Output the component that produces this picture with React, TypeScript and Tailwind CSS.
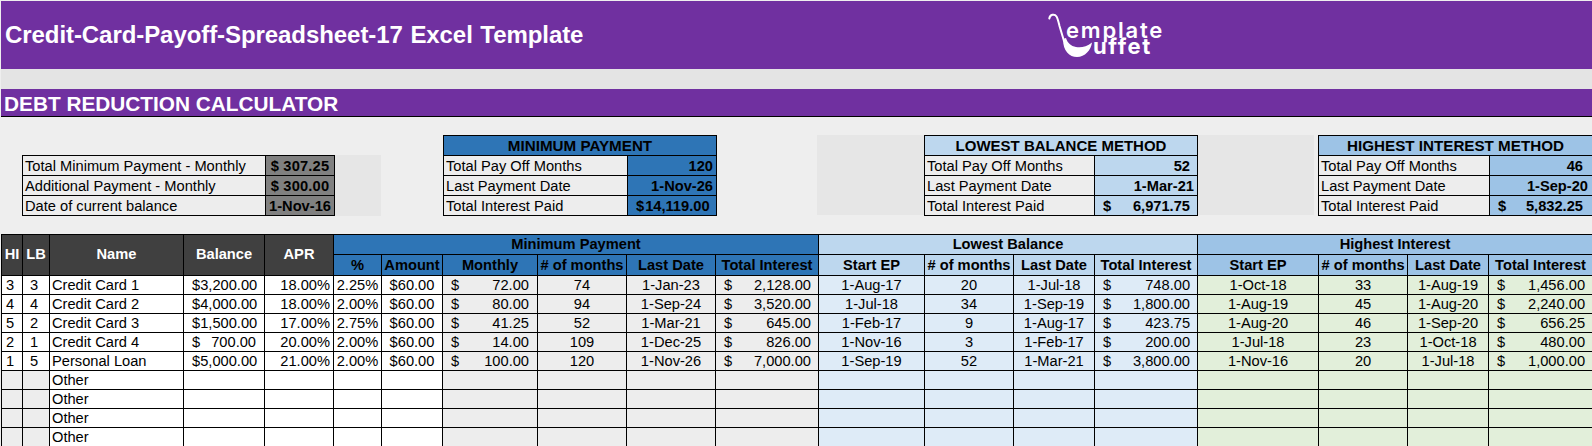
const font = { fontFamily: '"Liberation Sans", Arial, sans-serif' };

type SumRow = { label: string; value?: string; money?: [string, string]; cls: string };

function Money({ s, v, cls = "pl-2 pr-2" }: { s: string; v: string; cls?: string }) {
  return (
    <div className={`flex justify-between ${cls}`}>
      <span>{s}</span>
      <span>{v}</span>
    </div>
  );
}

function Summary({
  title,
  headBg,
  valBg,
  rows,
  widthCls,
  labelCls,
}: {
  title?: string;
  headBg: string;
  valBg: string;
  rows: SumRow[];
  widthCls: string;
  labelCls: string;
}) {
  return (
    <table className={`table-fixed ${widthCls} text-[14.67px] leading-[18px] text-black`}>
      <colgroup>
        <col className={labelCls} />
        <col />
      </colgroup>
      <tbody>
        {title && (
          <tr className="h-[20px]">
            <td colSpan={2} className={`border border-black p-0 text-center font-bold whitespace-nowrap ${headBg}`}>
              {title}
            </td>
          </tr>
        )}
        {rows.map((r) => (
          <tr key={r.label} className="h-[20px]">
            <td className="border border-black p-0 pl-[2px] whitespace-nowrap bg-[#ededed]">{r.label}</td>
            <td className={`border border-black p-0 font-bold whitespace-nowrap ${valBg} ${r.money ? "" : r.cls}`}>
              {r.money ? <Money s={r.money[0]} v={r.money[1]} cls={r.cls} /> : r.value}
            </td>
          </tr>
        ))}
      </tbody>
    </table>
  );
}

const cols = [21, 27, 134, 81, 69, 48, 61, 95, 89, 89, 103, 106, 89, 81, 103, 121, 89, 81, 104];

type Row = [string, string, string, string, string, string, string, string, string, string, string, string, string, string, string, string, string, string];

const data: Row[] = [
  ["3", "3", "Credit Card 1", "3,200.00", "18.00%", "2.25%", "72.00", "74", "1-Jan-23", "2,128.00", "1-Aug-17", "20", "1-Jul-18", "748.00", "1-Oct-18", "33", "1-Aug-19", "1,456.00"],
  ["4", "4", "Credit Card 2", "4,000.00", "18.00%", "2.00%", "80.00", "94", "1-Sep-24", "3,520.00", "1-Jul-18", "34", "1-Sep-19", "1,800.00", "1-Aug-19", "45", "1-Aug-20", "2,240.00"],
  ["5", "2", "Credit Card 3", "1,500.00", "17.00%", "2.75%", "41.25", "52", "1-Mar-21", "645.00", "1-Feb-17", "9", "1-Aug-17", "423.75", "1-Aug-20", "46", "1-Sep-20", "656.25"],
  ["2", "1", "Credit Card 4", "700.00", "20.00%", "2.00%", "14.00", "109", "1-Dec-25", "826.00", "1-Nov-16", "3", "1-Feb-17", "200.00", "1-Jul-18", "23", "1-Oct-18", "480.00"],
  ["1", "5", "Personal Loan", "5,000.00", "21.00%", "2.00%", "100.00", "120", "1-Nov-26", "7,000.00", "1-Sep-19", "52", "1-Mar-21", "3,800.00", "1-Nov-16", "20", "1-Jul-18", "1,000.00"],
];

const td = "border border-black p-0 whitespace-nowrap overflow-hidden";
const th = "border border-black p-0 font-bold text-center whitespace-nowrap overflow-hidden";

function Group({ bg, row, i }: { bg: string; row?: Row; i: number }) {
  return (
    <>
      <td className={`${td} ${bg} text-center`}>{row?.[i]}</td>
      <td className={`${td} ${bg} text-center`}>{row?.[i + 1]}</td>
      <td className={`${td} ${bg} text-center`}>{row?.[i + 2]}</td>
      <td className={`${td} ${bg}`}>{row && <Money s="$" v={row[i + 3]} cls="pl-2 pr-[7px]" />}</td>
    </>
  );
}

function DataRow({ row, name }: { row?: Row; name: string }) {
  return (
    <tr className="h-[19px]">
      <td className={`${td} text-center pr-1 ${row ? "bg-white" : "bg-[#ededed]"}`}>{row?.[0]}</td>
      <td className={`${td} text-center pr-1 ${row ? "bg-white" : "bg-[#ededed]"}`}>{row?.[1]}</td>
      <td className={`${td} bg-white pl-[2px]`}>{name}</td>
      <td className={`${td} bg-white`}>{row && <Money s="$" v={row[3]} />}</td>
      <td className={`${td} bg-white text-right pr-[3px]`}>{row?.[4]}</td>
      <td className={`${td} bg-white text-center`}>{row?.[5]}</td>
      <td className={`${td} bg-white text-center`}>{row && "$60.00"}</td>
      <td className={`${td} bg-[#ededed]`}>{row && <Money s="$" v={row[6]} />}</td>
      <td className={`${td} bg-[#ededed] text-center`}>{row?.[7]}</td>
      <td className={`${td} bg-[#ededed] text-center`}>{row?.[8]}</td>
      <td className={`${td} bg-[#ededed]`}>{row && <Money s="$" v={row[9]} cls="pl-2 pr-[7px]" />}</td>
      <Group bg="bg-[#deebf7]" row={row} i={10} />
      <Group bg="bg-[#e2efda]" row={row} i={14} />
    </tr>
  );
}

function SubHead({ bg, first }: { bg: string; first?: boolean }) {
  return (
    <>
      <th className={`${th} ${bg}`}>{first ? "Monthly" : "Start EP"}</th>
      <th className={`${th} ${bg}`}># of months</th>
      <th className={`${th} ${bg}`}>Last Date</th>
      <th className={`${th} ${bg}`}>Total Interest</th>
    </>
  );
}

function Logo() {
  return (
    <div className="relative w-[125px] h-[48px] text-white mt-[10px]" style={{ fontFamily: "Inter, sans-serif" }}>
      <svg className="absolute left-0 top-0" width="50" height="48" viewBox="0 0 50 48" fill="none">
        <path d="M3.3 7.5C4 3.5 8.5 2.3 10.5 5.5C11.8 7.6 12.5 11 13.5 15L18 30" stroke="white" strokeWidth="2" strokeLinecap="round" />
        <path d="M17 28C17 40 23.5 46 31 46C39 46 45 39 46 31.5C40.5 36 34.5 37 30 36C25 35 21.5 32 20 27Z" fill="white" />
      </svg>
      <span className="absolute left-[20px] top-[11px] text-[22px] leading-[16px] font-semibold tracking-[1.8px]">emplate</span>
      <span className="absolute left-[47px] top-[27px] text-[22px] leading-[16px] font-bold tracking-[1.6px]">uffet</span>
    </div>
  );
}

export default function App() {
  return (
    <div className="w-[1592px] h-[446px] overflow-hidden bg-[#eeeeee] pt-px pl-px text-black" style={font}>
      <div className="flex h-[68px] bg-[#7030a0] text-white">
        <div className="w-[1045px] pl-[4px] text-[24px] leading-[68px] font-bold whitespace-nowrap tracking-[-0.07px] [word-spacing:1px]">
          Credit-Card-Payoff-Spreadsheet-17 Excel Template
        </div>
        <Logo />
      </div>
      <div className="h-[20px] bg-[#e4e4e4]" />
      <div className="h-[28px] bg-[#7030a0] border-b border-black pl-[3px] pt-px text-[20.8px] leading-[27px] font-bold text-white whitespace-nowrap">
        DEBT REDUCTION CALCULATOR
      </div>

      <div className="flex h-[81px] mt-[18px] items-stretch">
        <div className="ml-[21px] w-[360px] flex items-end shrink-0">
          <div className="flex bg-[#e6e6e6] w-[359px]">
            <Summary
              headBg=""
              valBg="bg-[#808080]"
              widthCls="w-[313px]"
              labelCls="w-[243px]"
              rows={[
                { label: "Total Minimum Payment - Monthly", value: "$ 307.25", cls: "text-center tracking-[0.2px]" },
                { label: "Additional Payment - Monthly", value: "$ 300.00", cls: "text-center tracking-[0.2px]" },
                { label: "Date of current balance", value: "1-Nov-16", cls: "text-center" },
              ]}
            />
          </div>
        </div>
        <div className="ml-[61px] shrink-0 text-[15.2px]">
          <Summary
            title="MINIMUM PAYMENT"
            headBg="bg-[#2e75b6] text-[15.2px]"
            valBg="bg-[#2e75b6]"
            widthCls="w-[274px]"
            labelCls="w-[184px]"
            rows={[
              { label: "Total Pay Off Months", value: "120", cls: "text-right pr-[3px]" },
              { label: "Last Payment Date", value: "1-Nov-26", cls: "text-right pr-[3px]" },
              { label: "Total Interest Paid", money: ["$", "14,119.00"], cls: "justify-start gap-px pl-[8px]" },
            ]}
          />
        </div>
        <div className="ml-[100px] w-[107px] h-[80px] bg-[#e6e6e6] shrink-0" />
        <div className="shrink-0">
          <Summary
            title="LOWEST BALANCE METHOD"
            headBg="bg-[#bdd7ee] text-[15px]"
            valBg="bg-[#bdd7ee]"
            widthCls="w-[274px]"
            labelCls="w-[170px]"
            rows={[
              { label: "Total Pay Off Months", value: "52", cls: "text-right pr-[7px]" },
              { label: "Last Payment Date", value: "1-Mar-21", cls: "text-right pr-[3px]" },
              { label: "Total Interest Paid", money: ["$", "6,971.75"], cls: "pl-2 pr-[7px]" },
            ]}
          />
        </div>
        <div className="w-[116px] h-[80px] bg-[#e6e6e6] shrink-0" />
        <div className="ml-[4px] shrink-0">
          <Summary
            title="HIGHEST INTEREST METHOD"
            headBg="bg-[#9dc3e6] text-[15.2px]"
            valBg="bg-[#9dc3e6]"
            widthCls="w-[275px]"
            labelCls="w-[171px]"
            rows={[
              { label: "Total Pay Off Months", value: "46", cls: "text-right pr-[9px]" },
              { label: "Last Payment Date", value: "1-Sep-20", cls: "text-right pr-[4px]" },
              { label: "Total Interest Paid", money: ["$", "5,832.25"], cls: "pl-2 pr-[9px]" },
            ]}
          />
        </div>
      </div>

      <table className="table-fixed w-[1591px] mt-[18px] text-[14.67px] leading-[18px]">
        <colgroup>
          {cols.map((w, i) => (
            <col key={i} style={{ width: w }} />
          ))}
        </colgroup>
        <thead>
          <tr className="h-[20px]">
            {["HI", "LB", "Name", "Balance", "APR"].map((h) => (
              <th key={h} rowSpan={2} className={`${th} bg-[#404040] text-white pb-[2px]`}>
                {h}
              </th>
            ))}
            <th colSpan={6} className={`${th} bg-[#2e75b6] pb-px`}>Minimum Payment</th>
            <th colSpan={4} className={`${th} bg-[#bdd7ee] pb-px`}>Lowest Balance</th>
            <th colSpan={4} className={`${th} bg-[#9dc3e6] pb-px`}>Highest Interest</th>
          </tr>
          <tr className="h-[21px]">
            <th className={`${th} bg-[#2e75b6]`}>%</th>
            <th className={`${th} bg-[#2e75b6]`}>Amount</th>
            <SubHead bg="bg-[#2e75b6]" first />
            <SubHead bg="bg-[#bdd7ee]" />
            <SubHead bg="bg-[#9dc3e6]" />
          </tr>
        </thead>
        <tbody>
          {data.map((r) => (
            <DataRow key={r[2]} row={r} name={r[2]} />
          ))}
          {[0, 1, 2, 3].map((i) => (
            <DataRow key={i} name="Other" />
          ))}
        </tbody>
      </table>
    </div>
  );
}
